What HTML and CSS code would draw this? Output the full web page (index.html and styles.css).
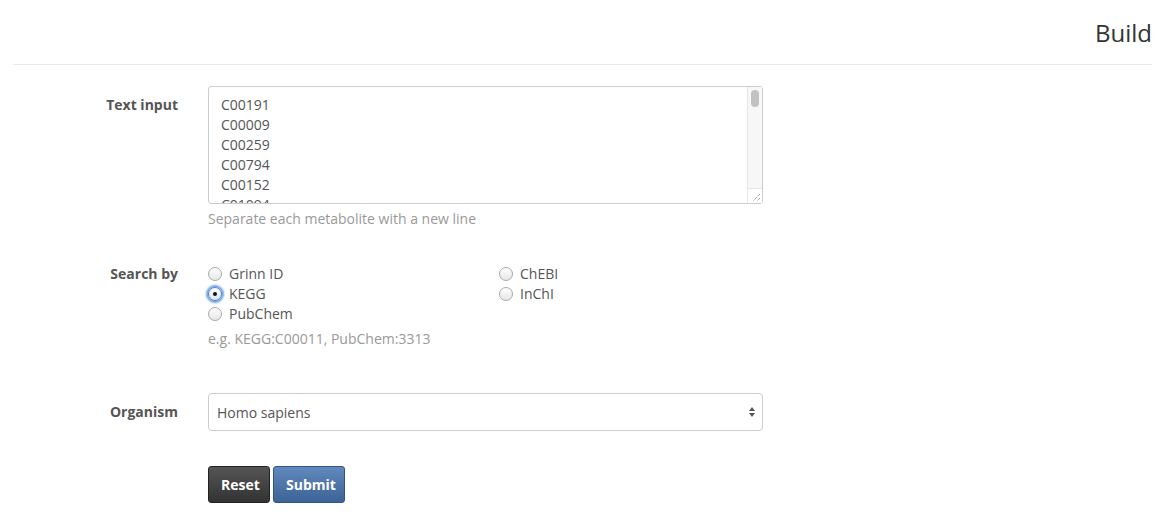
FILE: index.html
```html
<!DOCTYPE html>
<html>
<head>
<meta charset="utf-8">
<link rel="stylesheet" href="styles.css">
</head>
<body>
<div class="page">
  <header class="header">
    <h1 class="title">Build</h1>
  </header>
  <form class="form">
    <div class="row row-text">
      <label class="label label-text">Text input</label>
      <div class="control">
        <div class="textarea-wrap">
          <textarea class="textarea">C00191
C00009
C00259
C00794
C00152
C01094
C00031
C00022</textarea>
          <div class="scrollbar" aria-hidden="true">
            <div class="scroll-track"><div class="scroll-thumb"></div></div>
            <div class="scroll-corner">
              <svg width="14" height="14" viewBox="0 0 14 14"><path d="M12 5 L5 12 M12 9 L9 12" stroke="#777" stroke-width="1" stroke-dasharray="1 1" fill="none"/></svg>
            </div>
          </div>
        </div>
        <p class="help help-text">Separate each metabolite with a new line</p>
      </div>
    </div>
    <div class="row row-search">
      <label class="label">Search by</label>
      <div class="control">
        <div class="radios">
          <div class="radio-col">
            <label class="radio"><input type="radio" name="by" class="radio-input"><span>Grinn ID</span></label>
            <label class="radio"><input type="radio" name="by" class="radio-input" checked><span>KEGG</span></label>
            <label class="radio"><input type="radio" name="by" class="radio-input"><span>PubChem</span></label>
          </div>
          <div class="radio-col">
            <label class="radio"><input type="radio" name="by" class="radio-input"><span>ChEBI</span></label>
            <label class="radio"><input type="radio" name="by" class="radio-input"><span>InChI</span></label>
          </div>
        </div>
        <p class="help help-search">e.g. KEGG:C00011, PubChem:3313</p>
      </div>
    </div>
    <div class="row row-org">
      <label class="label label-org">Organism</label>
      <div class="control">
        <div class="select-wrap">
          <select class="select">
            <option>Homo sapiens</option>
          </select>
          <svg class="select-arrows" width="8" height="12" viewBox="0 0 8 12"><path d="M4 1 L7 5 L1 5 Z" fill="#555"/><path d="M4 11 L7 7 L1 7 Z" fill="#555"/></svg>
        </div>
      </div>
    </div>
    <div class="row row-buttons">
      <div class="label"></div>
      <div class="control buttons">
        <button type="button" class="btn btn-reset">Reset</button>
        <button type="button" class="btn btn-submit">Submit</button>
      </div>
    </div>
  </form>
</div>
</body>
</html>
```
FILE: styles.css
```css
html, body {
  margin: 0;
  padding: 0;
  background: #fff;
}
body {
  font-family: "Open Sans", "Liberation Sans", sans-serif;
  font-size: 14px;
  line-height: 20px;
  color: #555;
}
.page {
  padding: 0 10px 0 13px;
}
.header {
  display: flex;
  justify-content: flex-end;
  border-bottom: 1px solid #eaeaea;
  height: 65px;
  box-sizing: border-box;
}
.title {
  margin: 17px 0 0 0;
  font-size: 24px;
  font-weight: 400;
  line-height: 32px;
  color: #333;
}
.form {
  padding-top: 21px;
}
.row {
  display: grid;
  grid-template-columns: 165px 555px;
  column-gap: 30px;
}
.label {
  text-align: right;
  font-weight: 700;
  color: #555;
}
.label-text {
  padding-top: 9px;
}
.control {
  display: flex;
  flex-direction: column;
}
.textarea-wrap {
  position: relative;
  width: 555px;
  height: 118px;
}
.textarea {
  display: block;
  box-sizing: border-box;
  width: 555px;
  height: 118px;
  margin: 0;
  padding: 8px 12px;
  font-family: inherit;
  font-size: 14px;
  line-height: 20px;
  color: #555;
  border: 1px solid #ccc;
  border-radius: 3px;
  resize: none;
  outline: none;
  overflow: hidden;
}
.scrollbar {
  position: absolute;
  top: 1px;
  right: 1px;
  bottom: 1px;
  width: 15px;
  display: flex;
  flex-direction: column;
  border-left: 1px solid #e6e6e6;
  box-sizing: border-box;
}
.scroll-track {
  flex: 1;
  background: #f7f7f7;
  padding: 3px 2px 0 3px;
}
.scroll-thumb {
  width: 8px;
  height: 17px;
  border-radius: 4px;
  background: #c2c2c2;
}
.scroll-corner {
  height: 14px;
  background: #fff;
  border-top: 1px solid #e6e6e6;
  display: flex;
}
.help {
  margin: 5px 0 0 0;
  color: #999;
  font-size: 14px;
  line-height: 20px;
}
.row-search {
  margin-top: 35px;
}
.radios {
  display: grid;
  grid-template-columns: 291px 200px;
}
.radio-col {
  display: flex;
  flex-direction: column;
}
.radio {
  display: flex;
  align-items: center;
  gap: 7px;
  height: 20px;
  color: #555;
}
.radio-input {
  -webkit-appearance: none;
  appearance: none;
  margin: 0;
  width: 14px;
  height: 14px;
  border-radius: 50%;
  border: 1px solid #a9a9a9;
  background: linear-gradient(#ffffff, #e6e6e6);
  box-sizing: border-box;
  position: relative;
}
.radio-input:checked {
  border-color: #4a7fc7;
  box-shadow: 0 0 2px 2px #6ea0e8;
  background: linear-gradient(#ffffff, #dce6f2);
}
.radio-input:checked::after {
  content: "";
  position: absolute;
  left: 4px;
  top: 4px;
  width: 4px;
  height: 4px;
  border-radius: 50%;
  background: #111;
}
.help-search {
  margin-top: 5px;
}
.row-org {
  margin-top: 44px;
}
.label-org {
  padding-top: 9px;
}
.select-wrap {
  position: relative;
  width: 555px;
}
.select {
  -webkit-appearance: none;
  appearance: none;
  box-sizing: border-box;
  width: 555px;
  height: 38px;
  margin: 0;
  padding: 0 8px;
  font-family: inherit;
  font-size: 14px;
  color: #555;
  background: #fff;
  border: 1px solid #ccc;
  border-radius: 4px;
  outline: none;
}
.select-arrows {
  position: absolute;
  right: 7px;
  top: 13px;
  pointer-events: none;
}
.row-buttons {
  margin-top: 35px;
}
.buttons {
  flex-direction: row;
  gap: 3px;
}
.btn {
  height: 37px;
  padding: 0 12px;
  font-family: inherit;
  font-size: 14px;
  font-weight: 700;
  color: #fff;
  border-radius: 3px;
  cursor: pointer;
}
.btn-reset {
  width: 62px;
  background: linear-gradient(#555555, #333333);
  border: 1px solid #222;
}
.btn-submit {
  width: 72px;
  background: linear-gradient(#6189bd, #3c6396);
  border: 1px solid #2f5585;
}
```
